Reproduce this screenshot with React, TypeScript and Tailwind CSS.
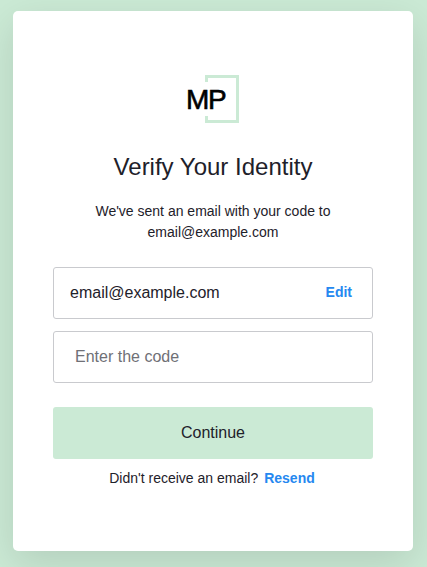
import React from "react";

function Logo() {
  return (
    <svg width="52" height="48" viewBox="0 0 52 48" role="img" aria-label="MP" className="block overflow-visible">
      <path d="M19.5 7V1.5H50.5V46.5H19.5V41" fill="none" stroke="#cbead5" strokeWidth="3" />
      <text
        x="-1 21"
        y="34"
        fontSize="28"
        fontFamily="Liberation Sans, Arial, sans-serif"
        fill="#000000"
        stroke="#000000"
        strokeWidth="0.6"
      >
        MP
      </text>
    </svg>
  );
}

export default function App() {
  return (
    <div className="flex min-h-screen items-center justify-center bg-[#cbead5] pt-2 pr-[14px] pb-[13px] pl-[13px] font-['Liberation_Sans',Arial,sans-serif] text-[#1e212a]">
      <main className="w-full max-w-[400px] rounded-[5px] bg-white px-10 pt-16 pb-[62px] shadow-[0_12px_40px_rgba(0,0,0,0.12)]">
        <header className="flex flex-col items-center text-center">
          <Logo />
          <h1 className="mt-7 text-2xl leading-8">Verify Your Identity</h1>
          <p className="mt-[18px] max-w-[240px] text-sm leading-[21px]">
            We've sent an email with your code to email@example.com
          </p>
        </header>
        <form className="mt-6" onSubmit={(event) => event.preventDefault()}>
          <div className="flex h-[52px] items-center justify-between rounded-[3px] border border-[#c9cace] pr-5 pl-4">
            <span className="text-base">email@example.com</span>
            <a href="#edit" className="pb-0.5 text-sm font-bold text-[#2588f0]">
              Edit
            </a>
          </div>
          <input
            type="text"
            aria-label="Enter the code"
            placeholder="Enter the code"
            className="mt-3 block h-[52px] w-full rounded-[3px] border border-[#c9cace] bg-white px-[21px] text-base placeholder:text-[#6f7076]"
          />
          <button type="submit" className="mt-6 block h-[52px] w-full rounded-[3px] bg-[#cbead5] text-base">
            Continue
          </button>
          <p className="mt-[9px] flex flex-wrap justify-center gap-x-1.5 pr-0.5 text-sm leading-[21px]">
            Didn't receive an email?
            <button type="button" className="font-bold text-[#2588f0]">
              Resend
            </button>
          </p>
        </form>
      </main>
    </div>
  );
}
